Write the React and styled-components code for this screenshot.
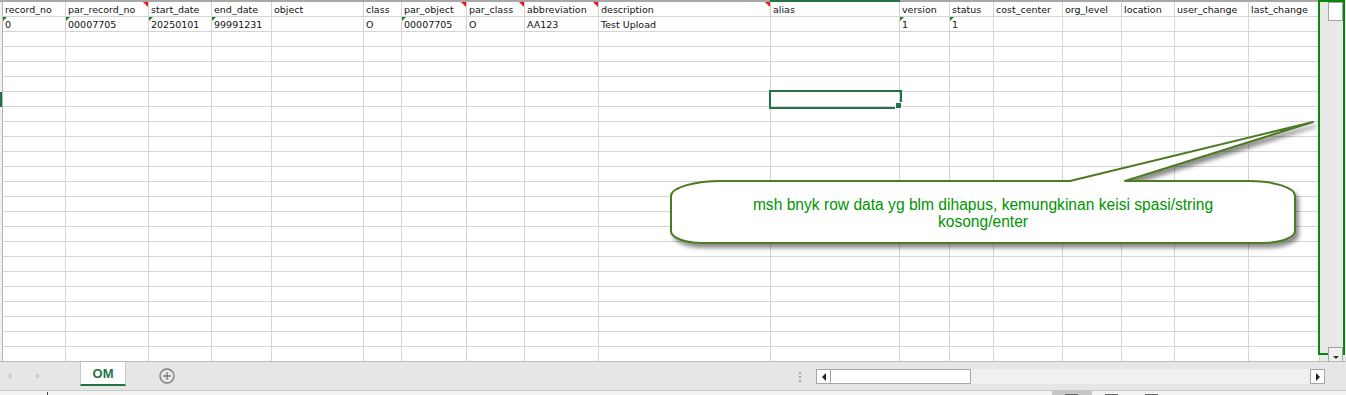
import React from 'react';
import styled, { createGlobalStyle, css } from 'styled-components';

const GlobalStyle = createGlobalStyle`
  html, body {
    margin: 0;
    padding: 0;
    background: #fff;
  }
  body {
    width: 1346px;
    height: 395px;
    overflow: hidden;
    font-family: "DejaVu Sans", "Liberation Sans", sans-serif;
  }
`

const COLUMNS = [
  { key: 'record_no', w: 63 },
  { key: 'par_record_no', w: 83, comment: true },
  { key: 'start_date', w: 63 },
  { key: 'end_date', w: 60 },
  { key: 'object', w: 92 },
  { key: 'class', w: 38 },
  { key: 'par_object', w: 65, comment: true },
  { key: 'par_class', w: 58, comment: true },
  { key: 'abbreviation', w: 74, comment: true },
  { key: 'description', w: 172, comment: true },
  { key: 'alias', w: 129 },
  { key: 'version', w: 50 },
  { key: 'status', w: 44 },
  { key: 'cost_center', w: 69 },
  { key: 'org_level', w: 59 },
  { key: 'location', w: 53 },
  { key: 'user_change', w: 74 },
  { key: 'last_change', w: null },
]

// value + whether excel shows the green "number stored as text" flag
const DATA_ROW = {
  record_no: ['0', true],
  par_record_no: ['00007705', true],
  start_date: ['20250101', true],
  end_date: ['99991231', true],
  class: ['O'],
  par_object: ['00007705', true],
  par_class: ['O'],
  abbreviation: ['AA123'],
  description: ['Test Upload'],
  version: ['1', true],
  status: ['1', true],
}

const ROW_COUNT = 24
const SELECTED_ROW = 6
const SELECTED_COL = 'alias'

const Window = styled.div`
  width: 1346px;
  height: 395px;
  display: flex;
  flex-direction: column;
  overflow: hidden;
`

const Workspace = styled.div`
  position: relative;
  height: 361px;
  flex-shrink: 0;
  display: flex;
  overflow: hidden;
`

const Sheet = styled.div`
  flex: 1;
  display: flex;
  flex-direction: column;
  min-width: 0;
`

const TopEdge = styled.div`
  height: 2px;
  flex-shrink: 0;
  background: linear-gradient(to right, #a8a8a8 770px, #217346 770px, #217346 900px, #a8a8a8 900px);
`

const Body = styled.div`
  flex: 1;
  display: flex;
  min-height: 0;
`

const RowStrip = styled.div`
  width: 2px;
  border-right: 1px solid #b4b4b4;
  background: #f1f1f1;
  display: flex;
  flex-direction: column;
`

const StripCell = styled.div`
  height: 15px;
  flex-shrink: 0;
  background: ${p => (p.$active ? '#217346' : 'transparent')};
`

const Grid = styled.div`
  flex: 1;
  display: grid;
  grid-template-columns: ${p => p.$cols};
  grid-auto-rows: 15px;
  align-content: start;
  overflow: hidden;
`

const Cell = styled.div`
  position: relative;
  box-sizing: border-box;
  border-right: 1px solid #d4d4d4;
  border-bottom: 1px solid #d4d4d4;
  padding: 1px 2px 0;
  font-size: 9.5px;
  line-height: 14px;
  color: #111;
  white-space: nowrap;
  overflow: hidden;

  ${p => p.$comment && css`
    &::after {
      content: '';
      position: absolute;
      top: 0;
      right: 0;
      border-top: 5px solid #e11;
      border-left: 5px solid transparent;
    }
  `}

  ${p => p.$flag && css`
    &::before {
      content: '';
      position: absolute;
      top: 0;
      left: 0;
      border-top: 4px solid #1d7a2a;
      border-right: 4px solid transparent;
    }
  `}

  ${p => p.$selected && css`
    overflow: visible;
    z-index: 2;
    outline: 2px solid #217346;
    &::after {
      content: '';
      position: absolute;
      right: -4px;
      bottom: -4px;
      width: 5px;
      height: 5px;
      background: #217346;
      border: 1px solid #fff;
      box-sizing: content-box;
      transform: translate(-1px, -1px);
    }
  `}
`

const VScroll = styled.div`
  width: 26px;
  flex-shrink: 0;
  background: #e9e9e9;
  display: flex;
  flex-direction: column;
  justify-content: space-between;
`

const VThumb = styled.div`
  margin: 2px 3px 0 8px;
  height: 19px;
  background: #fff;
  border: 1px solid #a3a3a3;
  box-sizing: border-box;
`

const VDownBtn = styled.div`
  position: relative;
  z-index: 5;
  margin: 0 3px 0 8px;
  height: 14px;
  background: #f0f0f0;
  border: 1px solid #a3a3a3;
  border-bottom: none;
  box-sizing: border-box;
  display: flex;
  justify-content: center;
  align-items: flex-end;

  &::after {
    content: '';
    border-top: 3px solid #333;
    border-left: 3px solid transparent;
    border-right: 3px solid transparent;
    margin-bottom: 2px;
  }
`

const Annotation = styled.div`
  position: absolute;
  left: 1318px;
  top: 0;
  width: 27px;
  height: 355px;
  box-sizing: border-box;
  border: 2px solid #0a870a;
  z-index: 4;
  pointer-events: none;
`

const CalloutShape = styled.svg`
  position: absolute;
  left: 0;
  top: 0;
  z-index: 6;
  overflow: visible;
  pointer-events: none;
`

const CalloutText = styled.div`
  position: absolute;
  left: 671px;
  top: 182px;
  width: 624px;
  height: 61px;
  padding: 0 50px;
  box-sizing: border-box;
  z-index: 7;
  display: flex;
  align-items: center;
  justify-content: center;
  text-align: center;
  font-family: "Liberation Sans", Arial, sans-serif;
  font-size: 15.6px;
  line-height: 17px;
  color: #009400;
`

const TabBar = styled.div`
  height: 28px;
  flex-shrink: 0;
  border-top: 1px solid #b9b9b9;
  background: #e6e6e6;
  display: flex;
  align-items: flex-start;
`

const Nav = styled.div`
  width: 80px;
  height: 28px;
  display: flex;
  align-items: center;
  padding-left: 7px;
  gap: 25px;
  box-sizing: border-box;
`

const NavArrow = styled.span`
  width: 0;
  height: 0;
  border-top: 3.5px solid transparent;
  border-bottom: 3.5px solid transparent;
  ${p => (p.$dir === 'left'
    ? css`border-right: 4px solid #c6c6c6;`
    : css`border-left: 4px solid #c6c6c6;`)}
`

const SheetTab = styled.div`
  width: 46px;
  height: 24px;
  box-sizing: border-box;
  background: #fff;
  border-left: 1px solid #c8c8c8;
  border-right: 1px solid #c8c8c8;
  border-bottom: 2px solid #217346;
  display: flex;
  align-items: center;
  justify-content: center;
  font-family: "Liberation Sans", Arial, sans-serif;
  font-weight: bold;
  font-size: 13px;
  color: #217346;
`

const AddSheet = styled.svg`
  margin: 6px 0 0 33px;
`

const Spacer = styled.div`
  flex: 1;
`

const Dots = styled.div`
  width: 3px;
  margin: 10px 14px 0 0;
  display: flex;
  flex-direction: column;
  gap: 2px;

  span {
    width: 2px;
    height: 2px;
    background: #a8a8a8;
  }
`

const HScroll = styled.div`
  width: 509px;
  height: 15px;
  margin: 7px 21px 0 0;
  background: #f0f0f0;
  display: flex;
`

const ScrollBtn = styled.div`
  width: 15px;
  box-sizing: border-box;
  background: #fff;
  border: 1px solid #a6a6a6;
  display: flex;
  align-items: center;
  justify-content: center;

  &::after {
    content: '';
    border-top: 4px solid transparent;
    border-bottom: 4px solid transparent;
    ${p => (p.$dir === 'left'
      ? css`border-right: 4px solid #222;`
      : css`border-left: 4px solid #222;`)}
  }
`

const HThumb = styled.div`
  width: 140px;
  box-sizing: border-box;
  background: #fff;
  border: 1px solid #a6a6a6;
  border-left: none;
`

const Track = styled.div`
  flex: 1;
`

const StatusBar = styled.div`
  height: 4px;
  flex-shrink: 0;
  border-top: 1px solid #c8c8c8;
  background: #f3f3f3;
  display: flex;
  padding-left: 47px;
`

const Tick = styled.div`
  width: 1px;
  height: 3px;
  margin-top: 1px;
  background: #444;
`

const ViewGroup = styled.div`
  margin-left: auto;
  margin-right: 174px;
  display: flex;
`

const ViewBtn = styled.div`
  width: 40px;
  background: ${p => (p.$active ? '#c6c6c6' : 'transparent')};
  padding: 3px 0 0 13px;
  box-sizing: border-box;

  &::after {
    content: '';
    display: block;
    width: 13px;
    height: 1px;
    background: #666;
  }
`

const gridCols = COLUMNS.map(c => (c.w ? `${c.w}px` : '1fr')).join(' ')

const renderCell = (col, rowIndex) => {
  const key = `${rowIndex}-${col.key}`
  if (rowIndex === 0) {
    return <Cell key={key} $comment={col.comment}>{col.key}</Cell>
  }
  if (rowIndex === 1) {
    const [value, flag] = DATA_ROW[col.key] || ['']
    return <Cell key={key} $flag={flag}>{value}</Cell>
  }
  const selected = rowIndex === SELECTED_ROW && col.key === SELECTED_COL
  return <Cell key={key} $selected={selected} />
}

const Callout = () => (
  <>
    <CalloutShape width="1320" height="361">
      <defs>
        <filter id="callout-shadow" x="-5%" y="-20%" width="115%" height="160%">
          <feDropShadow dx="3" dy="4" stdDeviation="2" floodColor="#000" floodOpacity="0.45" />
        </filter>
      </defs>
      <path
        d="M 722 181 L 1070 181 L 1313 122 L 1125 181 L 1249 181
           A 46 15 0 0 1 1295 196 L 1295 231 A 33 12 0 0 1 1262 243
           L 702 243 A 31 12 0 0 1 671 231 L 671 196 A 51 15 0 0 1 722 181 Z"
        fill="#fff"
        stroke="#4d7a25"
        strokeWidth="2"
        strokeLinejoin="round"
        filter="url(#callout-shadow)"
      />
    </CalloutShape>
    <CalloutText>
      msh bnyk row data yg blm dihapus, kemungkinan keisi spasi/string kosong/enter
    </CalloutText>
  </>
)

const App = () => {
  const rows = Array.from({ length: ROW_COUNT }, (_, i) => i)
  return (
    <Window>
      <GlobalStyle />
      <Workspace>
        <Sheet>
          <TopEdge />
          <Body>
            <RowStrip>
              {rows.map(i => <StripCell key={i} $active={i === SELECTED_ROW} />)}
            </RowStrip>
            <Grid $cols={gridCols}>
              {rows.map(r => COLUMNS.map(col => renderCell(col, r)))}
            </Grid>
          </Body>
        </Sheet>
        <VScroll>
          <VThumb />
          <VDownBtn />
        </VScroll>
        <Annotation />
        <Callout />
      </Workspace>

      <TabBar>
        <Nav>
          <NavArrow $dir="left" />
          <NavArrow $dir="right" />
        </Nav>
        <SheetTab>OM</SheetTab>
        <AddSheet width="16" height="16" viewBox="0 0 16 16">
          <circle cx="8" cy="8" r="7" fill="none" stroke="#7b7b7b" strokeWidth="1.3" />
          <path d="M8 4.2v7.6M4.2 8h7.6" stroke="#7b7b7b" strokeWidth="1.4" />
        </AddSheet>
        <Spacer />
        <Dots>
          <span />
          <span />
          <span />
        </Dots>
        <HScroll>
          <ScrollBtn $dir="left" />
          <HThumb />
          <Track />
          <ScrollBtn $dir="right" />
        </HScroll>
      </TabBar>

      <StatusBar>
        <Tick />
        <ViewGroup>
          <ViewBtn $active />
          <ViewBtn />
          <ViewBtn />
        </ViewGroup>
      </StatusBar>
    </Window>
  )
}

export default App
